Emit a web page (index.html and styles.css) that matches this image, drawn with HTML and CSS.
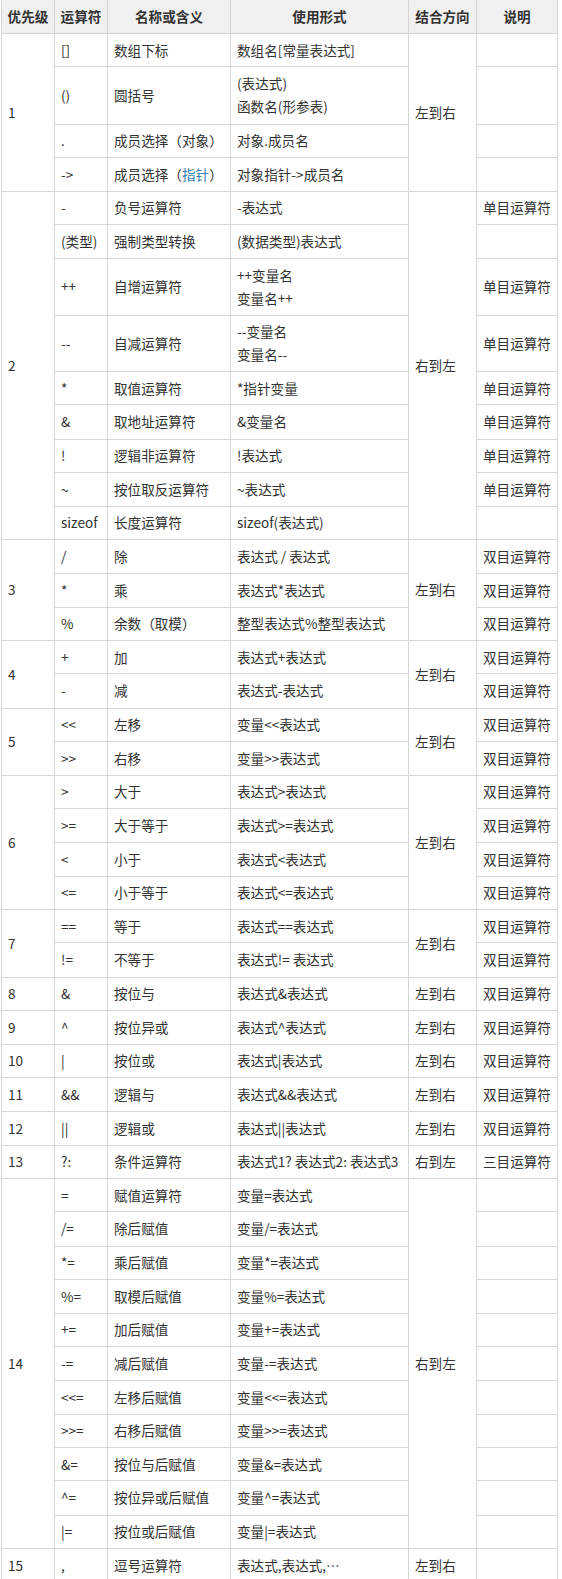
FILE: index.html
```html
<!DOCTYPE html>
<html lang="zh">
<head>
<meta charset="utf-8">
<title>运算符优先级</title>
<link rel="stylesheet" href="styles.css">
</head>
<body>
<table class="ops">
<colgroup>
<col class="c1"><col class="c2"><col class="c3"><col class="c4"><col class="c5"><col class="c6">
</colgroup>
<thead>
<tr><th>优先级</th><th>运算符</th><th>名称或含义</th><th>使用形式</th><th>结合方向</th><th>说明</th></tr>
</thead>
<tbody>
<tr><td rowspan="4">1</td><td>[]</td><td>数组下标</td><td>数组名[常量表达式]</td><td rowspan="4">左到右</td><td></td></tr>
<tr><td>()</td><td>圆括号</td><td>(表达式)<br>函数名(形参表)</td><td></td></tr>
<tr><td>.</td><td>成员选择（对象）</td><td>对象.成员名</td><td></td></tr>
<tr><td>-&gt;</td><td>成员选择（<span class="link">指针</span>）</td><td>对象指针-&gt;成员名</td><td></td></tr>

<tr><td rowspan="9">2</td><td>-</td><td>负号运算符</td><td>-表达式</td><td rowspan="9">右到左</td><td>单目运算符</td></tr>
<tr><td>(类型)</td><td>强制类型转换</td><td>(数据类型)表达式</td><td></td></tr>
<tr><td>++</td><td>自增运算符</td><td>++变量名<br>变量名++</td><td>单目运算符</td></tr>
<tr><td>--</td><td>自减运算符</td><td>--变量名<br>变量名--</td><td>单目运算符</td></tr>
<tr><td>*</td><td>取值运算符</td><td>*指针变量</td><td>单目运算符</td></tr>
<tr><td>&amp;</td><td>取地址运算符</td><td>&amp;变量名</td><td>单目运算符</td></tr>
<tr><td>!</td><td>逻辑非运算符</td><td>!表达式</td><td>单目运算符</td></tr>
<tr><td>~</td><td>按位取反运算符</td><td>~表达式</td><td>单目运算符</td></tr>
<tr><td>sizeof</td><td>长度运算符</td><td>sizeof(表达式)</td><td></td></tr>

<tr><td rowspan="3">3</td><td>/</td><td>除</td><td>表达式 / 表达式</td><td rowspan="3">左到右</td><td>双目运算符</td></tr>
<tr><td>*</td><td>乘</td><td>表达式*表达式</td><td>双目运算符</td></tr>
<tr><td>%</td><td>余数（取模）</td><td>整型表达式%整型表达式</td><td>双目运算符</td></tr>

<tr><td rowspan="2">4</td><td>+</td><td>加</td><td>表达式+表达式</td><td rowspan="2">左到右</td><td>双目运算符</td></tr>
<tr><td>-</td><td>减</td><td>表达式-表达式</td><td>双目运算符</td></tr>

<tr><td rowspan="2">5</td><td>&lt;&lt;</td><td>左移</td><td>变量&lt;&lt;表达式</td><td rowspan="2">左到右</td><td>双目运算符</td></tr>
<tr><td>&gt;&gt;</td><td>右移</td><td>变量&gt;&gt;表达式</td><td>双目运算符</td></tr>

<tr><td rowspan="4">6</td><td>&gt;</td><td>大于</td><td>表达式&gt;表达式</td><td rowspan="4">左到右</td><td>双目运算符</td></tr>
<tr><td>&gt;=</td><td>大于等于</td><td>表达式&gt;=表达式</td><td>双目运算符</td></tr>
<tr><td>&lt;</td><td>小于</td><td>表达式&lt;表达式</td><td>双目运算符</td></tr>
<tr><td>&lt;=</td><td>小于等于</td><td>表达式&lt;=表达式</td><td>双目运算符</td></tr>

<tr><td rowspan="2">7</td><td>==</td><td>等于</td><td>表达式==表达式</td><td rowspan="2">左到右</td><td>双目运算符</td></tr>
<tr><td>!=</td><td>不等于</td><td>表达式!= 表达式</td><td>双目运算符</td></tr>

<tr><td>8</td><td>&amp;</td><td>按位与</td><td>表达式&amp;表达式</td><td>左到右</td><td>双目运算符</td></tr>
<tr><td>9</td><td>^</td><td>按位异或</td><td>表达式^表达式</td><td>左到右</td><td>双目运算符</td></tr>
<tr><td>10</td><td>|</td><td>按位或</td><td>表达式|表达式</td><td>左到右</td><td>双目运算符</td></tr>
<tr><td>11</td><td>&amp;&amp;</td><td>逻辑与</td><td>表达式&amp;&amp;表达式</td><td>左到右</td><td>双目运算符</td></tr>
<tr><td>12</td><td>||</td><td>逻辑或</td><td>表达式||表达式</td><td>左到右</td><td>双目运算符</td></tr>
<tr><td>13</td><td>?:</td><td>条件运算符</td><td>表达式1? 表达式2: 表达式3</td><td>右到左</td><td>三目运算符</td></tr>

<tr><td rowspan="11">14</td><td>=</td><td>赋值运算符</td><td>变量=表达式</td><td rowspan="11">右到左</td><td></td></tr>
<tr><td>/=</td><td>除后赋值</td><td>变量/=表达式</td><td></td></tr>
<tr><td>*=</td><td>乘后赋值</td><td>变量*=表达式</td><td></td></tr>
<tr><td>%=</td><td>取模后赋值</td><td>变量%=表达式</td><td></td></tr>
<tr><td>+=</td><td>加后赋值</td><td>变量+=表达式</td><td></td></tr>
<tr><td>-=</td><td>减后赋值</td><td>变量-=表达式</td><td></td></tr>
<tr><td>&lt;&lt;=</td><td>左移后赋值</td><td>变量&lt;&lt;=表达式</td><td></td></tr>
<tr><td>&gt;&gt;=</td><td>右移后赋值</td><td>变量&gt;&gt;=表达式</td><td></td></tr>
<tr><td>&amp;=</td><td>按位与后赋值</td><td>变量&amp;=表达式</td><td></td></tr>
<tr><td>^=</td><td>按位异或后赋值</td><td>变量^=表达式</td><td></td></tr>
<tr><td>|=</td><td>按位或后赋值</td><td>变量|=表达式</td><td></td></tr>

<tr><td>15</td><td>,</td><td>逗号运算符</td><td>表达式,表达式,…</td><td>左到右</td><td></td></tr>
</tbody>
</table>
</body>
</html>
```

FILE: styles.css
```css
html, body {
  margin: 0;
  padding: 0;
  background: #ffffff;
}

body {
  font-family: "Noto Sans CJK SC", "Noto Sans", sans-serif;
  font-size: 13.6px;
  color: #333333;
}

.ops {
  margin-left: 1px;
  width: 557px;
  table-layout: fixed;
  border-collapse: collapse;
}

.c1 { width: 53px; }
.c2 { width: 53px; }
.c3 { width: 123px; }
.c4 { width: 178px; }
.c5 { width: 68px; }
.c6 { width: 81px; }

.ops th,
.ops td {
  border: 1px solid #d6d6d6;
  padding: 4.7px 0 4.7px 6px;
  line-height: 23px;
  white-space: nowrap;
  overflow: hidden;
  vertical-align: middle;
  text-align: left;
}

/* spread the fractional row pitch (≈33.4px) over the rows */
.ops tbody tr:nth-child(4n+2) td {
  padding-bottom: 5.7px;
}

.ops th {
  background: #f0f0f0;
  font-weight: bold;
  text-align: center;
  padding: 5px 0;
  color: #333333;
}

.ops thead tr th {
  border-top: none;
}

.link {
  color: #2f7fb4;
}
```
